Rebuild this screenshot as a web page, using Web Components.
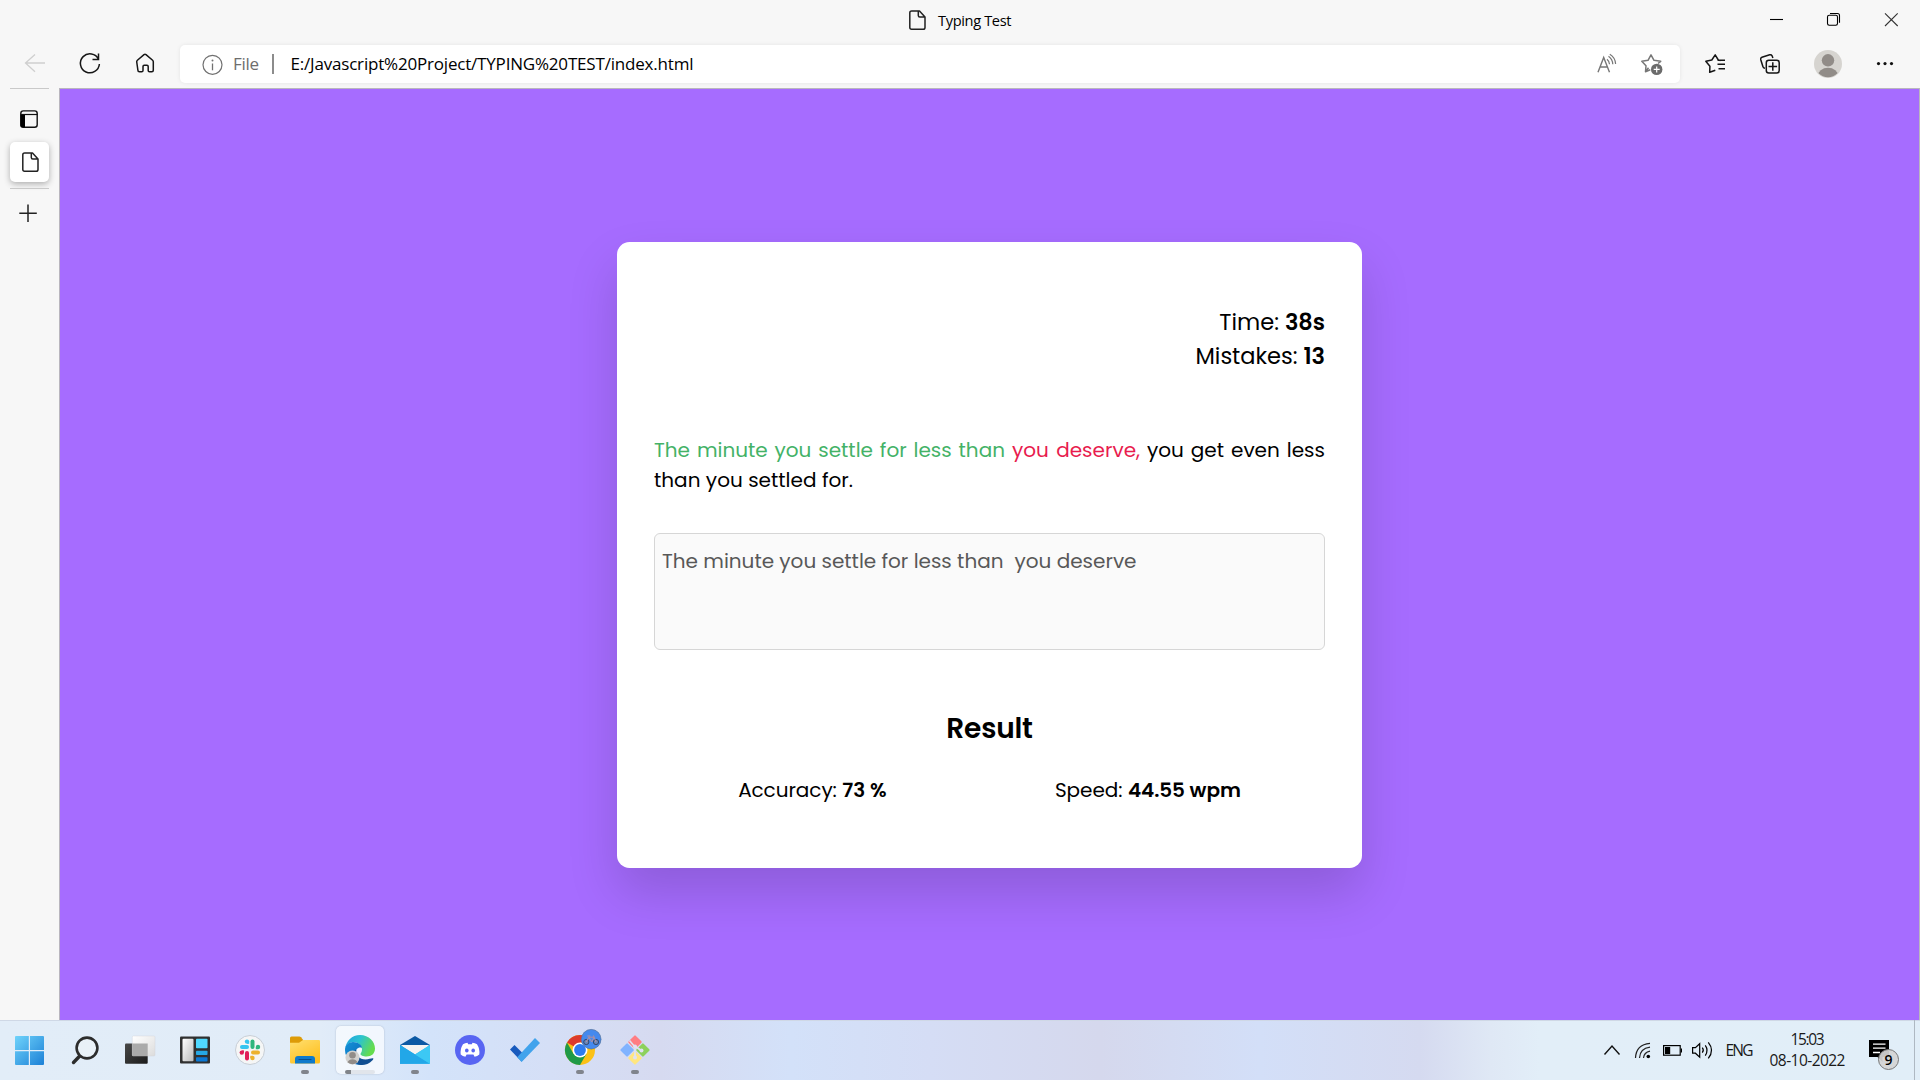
<!DOCTYPE html>
<html lang="en">
<head>
<meta charset="utf-8">
<title>Typing Test</title>
<style>
html,body{margin:0;height:100%;overflow:hidden;background:#f7f7f7}
body{font-family:"Open Sans","Noto Sans",sans-serif;color:#000}
</style>
</head>
<body>
<desktop-screen></desktop-screen>
<script>
// Icon artwork: [viewBox, markup]. The viewBox size is also the box size in pixels.
const doc = '<path d="M2.2 1h8.300l5.500 6v10.500q0 1.800-1.800 1.800H2.500Q.8 19.300.8 17.500V2.800Q.8 1 2.500 1M9.300 1.200V5.600q0 1.500 1.500 1.500H15.800" fill="none" stroke="#222" stroke-width="1.500" stroke-linejoin="round"/>';
const ICONS = {
  doc: ['0 0 17 20', doc],
  back: ['7 40 55 48', '<path d="M45 63H25.500M35 54.500 25.500 63l9.500 8.700" fill="none" stroke="#cfcfcf" stroke-width="1.300"/>'],
  reload: ['62 40 55 48', '<path d="M98.500 59.200A9.500 9.500 0 1 0 99.400 64M98.500 53.500V59.500H92.500" fill="none" stroke="#161616" stroke-width="1.500"/>'],
  home: ['117 40 55 48', '<path d="M136.700 61.800q0-.9.700-1.500l6.600-5.600q1-.8 2 0l6.600 5.600q.7.600.7 1.500v8.400q0 1.500-1.500 1.500h-2.300q-1.300 0-1.300-1.300v-4q0-1.200-1.200-1.200h-2.800q-1.200 0-1.200 1.200v4q0 1.300-1.300 1.300h-2.300q-1.500 0-1.500-1.500z" fill="none" stroke="#161616" stroke-width="1.500"/>'],
  info: ['202 53 21 21', '<circle cx="212.500" cy="63.800" r="9.500" fill="none" stroke="#717171" stroke-width="1.200"/><path d="M212.500 62.500v6.800" stroke="#717171" stroke-width="1.300"/><circle cx="212.500" cy="59.500" r="1" fill="#717171"/>'],
  read: ['1596 52 23 22', '<path d="M1598 71.200l5.700-14.800 5.800 14.800M1600 66h7.500" fill="none" stroke="#777" stroke-width="1.400"/><path d="M1607 58.200q2.200 1.700 2.500 5M1608.500 55.200q4 2.800 4.300 8M1609.800 53.200q5.500 3.300 5.800 9.800" fill="none" stroke="#777" stroke-width="1.200"/>'],
  addstar: ['1640 52 24 24', '<path d="M1648.500 67.800 1645.500 71.700 1646 65.800 1641.800 61.300 1648 60.300 1651 54.800 1654 60.300 1660.700 61.300 1658 63.500M1645.500 71.700 1650.300 69.800" fill="none" stroke="#777" stroke-width="1.500" stroke-linejoin="round"/><circle cx="1656.700" cy="69.400" r="5.700" fill="#6b6b6b"/><path d="M1653.700 69.400h6M1656.700 66.400v6" stroke="#fff" stroke-width="1.200"/>'],
  favs: ['1688 40 55 48', '<path d="M1715.300 70.200 1709.700 72.300 1709.900 66.200 1705.800 61.300 1711.800 60 1715.200 54.800 1718.300 60 1720.500 60.500M1717.500 64.300H1725M1718.500 68.700H1725M1717.500 60.200H1725" fill="none" stroke="#161616" stroke-width="1.500" stroke-linejoin="round"/>'],
  collections: ['1743 40 55 48', '<path d="M1765 68.300q-1.800-.3-2.200-2L1760.700 59.500q-.4-1.700 1.200-2.300l7.800-2.400q1.600-.4 2.400 1l.8 2.200" fill="none" stroke="#161616" stroke-width="1.500"/><rect x="1766.300" y="60.200" width="12.900" height="12.700" rx="2.500" fill="none" stroke="#161616" stroke-width="1.500"/><path d="M1768.500 66.500h8.600M1772.800 62.300v8.400" stroke="#161616" stroke-width="1.500"/>'],
  avatar: ['1798 40 55 48', '<clipPath id="a"><circle cx="1828" cy="64" r="13.200"/></clipPath><circle cx="1828" cy="64" r="14" fill="#d6d4d0"/><circle cx="1828" cy="60.300" r="6.200" fill="#918c88"/><ellipse cx="1828" cy="76" rx="10.300" ry="8.300" fill="#918c88" clip-path="url(#a)"/>'],
  more: ['1853 40 55 48', '<g fill="#111"><circle cx="1878.500" cy="63.600" r="1.600"/><circle cx="1885" cy="63.600" r="1.600"/><circle cx="1891.500" cy="63.600" r="1.600"/></g>'],
  min: ['1748 0 57 40', '<path d="M1770 19.500h13" stroke="#000" stroke-width="1.100"/>'],
  restore: ['1805 0 57 40', '<rect x="1827.500" y="15.300" width="10" height="10" rx="1.700" fill="none" stroke="#000" stroke-width="1.100"/><path d="M1830 13.500h7.500q2 0 2 2v7.300" fill="none" stroke="#000" stroke-width="1.100"/>'],
  close: ['1862 0 58 40', '<path d="M1885 13.300l12.700 12.700M1897.700 13.300 1885 26" stroke="#333" stroke-width="1.100"/>'],
  tabs: ['20 110 18 18', '<rect x="20.800" y="110.900" width="16.400" height="16.400" rx="2.500" fill="none" stroke="#111" stroke-width="1.400"/><path d="M20.500 114.500H37.500" stroke="#111" stroke-width="1.200"/><path d="M20.500 115H25v12.300h-2.500q-2 0-2-2z" fill="#000"/>'],
  plus: ['19 204 18 18', '<path d="M19.300 213.300H36.800M28 204.600V222" stroke="#222" stroke-width="1.500"/>'],
  start: ['2 1020 55 60', '<linearGradient id="g" gradientUnits="userSpaceOnUse" x1="15" y1="1036" x2="44" y2="1065"><stop offset="0" stop-color="#6fd3fb"/><stop offset="1" stop-color="#1c80d6"/></linearGradient><path fill="url(#g)" d="M15 1037q0-1 1-1h12.800v14H15zM30 1036h13q1 0 1 1v13H30zM15 1051.200h13.800V1065H16q-1 0-1-1zM30 1051.200h14V1064q0 1-1 1H30z"/>'],
  search: ['57 1020 55 60', '<circle cx="87" cy="1048" r="10.400" fill="#edf2f7" fill-opacity=".7" stroke="#2c2c2c" stroke-width="2.600"/><path d="M79.500 1056.300 73.500 1062.500" stroke="#2c2c2c" stroke-width="3.400" stroke-linecap="round"/>'],
  taskview: ['112 1020 55 60', '<linearGradient id="g" x2="1" y2="1"><stop stop-color="#484848"/><stop offset="1" stop-color="#1b1b1b"/></linearGradient><linearGradient id="h" x2="1" y2="1"><stop stop-color="#fff"/><stop offset="1" stop-color="#dcdcdc"/></linearGradient><rect x="125" y="1043.500" width="22.700" height="20.200" rx="1" fill="url(#g)"/><rect x="132.300" y="1036" width="22.700" height="20" rx="1" fill="url(#h)" stroke="#cfd2d6" stroke-width=".4"/><rect x="132.300" y="1043.500" width="15.400" height="12.500" fill="#aaa"/>'],
  widgets: ['167 1020 55 60', '<linearGradient id="g" x2="1" y2="1"><stop stop-color="#fff"/><stop offset="1" stop-color="#bbb"/></linearGradient><rect x="180" y="1036.500" width="30" height="27" rx="1" fill="#303030"/><rect x="182.500" y="1038.800" width="11" height="22.400" rx="1" fill="url(#g)"/><rect x="196" y="1038.800" width="11.500" height="9.500" rx=".8" fill="#50d9ff"/><rect x="196" y="1050.800" width="11.500" height="4.200" rx=".8" fill="#26a8e4"/><rect x="196" y="1057.300" width="11.500" height="4.200" rx=".8" fill="#0b78d4"/>'],
  slack: ['222 1020 55 60', '<circle cx="250" cy="1050" r="14.500" fill="#f5f6f6" stroke="#c7ced6"/><g stroke-width="4" stroke-linecap="round"><path d="M242 1047h5" stroke="#36c5f0"/><path d="M252.500 1041.500v5.500" stroke="#2eb67d"/><path d="M253 1052.500h5" stroke="#ecb22e"/><path d="M247 1053v5.500" stroke="#e01e5a"/></g><circle cx="247" cy="1041.600" r="2.200" fill="#36c5f0"/><path d="M247 1041.600h2.200v2.200H247z" fill="#36c5f0"/><circle cx="258" cy="1047" r="2.200" fill="#2eb67d"/><path d="M255.800 1047h2.200v2.200h-2.200z" fill="#2eb67d"/><circle cx="241.800" cy="1052.600" r="2.200" fill="#e01e5a"/><path d="M241.800 1050.400h2.200v2.200h-2.200z" fill="#e01e5a"/><circle cx="252.500" cy="1058" r="2.200" fill="#ecb22e"/><path d="M250.300 1055.800h2.200v2.200h-2.200z" fill="#ecb22e"/>'],
  folder: ['277 1020 55 60', '<linearGradient id="g" x2=".6" y2="1"><stop stop-color="#ffdf70"/><stop offset="1" stop-color="#ffc020"/></linearGradient><path d="M290 1038q0-1.500 1.500-1.500h7.800q1 0 1.700.8l2.500 3.200-3 3H290z" fill="#dd9b07"/><path d="M290 1042.800h9l4-2.800h16q1 0 1 1v21q0 1.500-1.500 1.500h-27q-1.500 0-1.500-1.500z" fill="url(#g)"/><path d="M295 1063.500v-4.500q0-3 3-3h14q3 0 3 3v4.500z" fill="#0f7acb"/><path d="M299 1059.500h12" stroke="#0a4f8e" stroke-width="1.200" stroke-linecap="round"/>'],
  edge: ['332 1020 55 60', '<linearGradient id="g" x1="0" x2="1" y2=".4"><stop stop-color="#1e9fe0"/><stop offset=".5" stop-color="#2cc3d0"/><stop offset="1" stop-color="#64dc4e"/></linearGradient><linearGradient id="h" x2="1" y2="1"><stop stop-color="#1491d8"/><stop offset="1" stop-color="#0b64b4"/></linearGradient><path d="M345.200 1049C346 1041 352 1035 360 1035c9 0 15 6.500 15 13.500 0 5-3.500 8-8.500 8-3.500 0-6-1.200-6-2.500 0-.8 1.500-1.800 1.500-4.500 0-4-4-7.500-9-7.500-3.500 0-6.500 2-7.800 7z" fill="url(#g)"/><path d="M345 1050c0-5 3.500-8 8-8 5 0 9 3 9 6-3-1.500-7 1-7 6 0 6 4 10.500 9 10.800-10 1.500-19-5-19-14.800z" fill="url(#h)"/><path d="M356.500 1049.500c-1.500 5 3 10 9 10 3.500 0 6-1.500 7.500-1.200.8.300.2 1.200-.5 2-3.500 3.800-7.500 5-11.500 4.800-6-.8-9-7-8-11.500.5-2 2-3.500 3.500-4.100z" fill="#114f92"/><circle cx="352.500" cy="1057.500" r="7" fill="#d2d1ce"/><circle cx="352.500" cy="1055.300" r="3.300" fill="#918c88"/><path d="M347.500 1062.300q1.500-3 5-3t5 3q-5 4-10 0z" fill="#918c88"/>'],
  mail: ['387 1020 55 60', '<linearGradient id="g" x2="1"><stop stop-color="#1b94e0"/><stop offset="1" stop-color="#35c6f6"/></linearGradient><path d="M400 1045 415 1036l15 9v4H400z" fill="#0c59a4"/><path d="M401 1045h28l-8 11h-12z" fill="#f4f3f2"/><path d="M400 1045l15 9.500 15-9.500v18.800H400z" fill="url(#g)"/><path d="M400 1045 430 1063.800H400z" fill="#22a7e8"/><path d="M415 1054.500 430 1063.800V1045z" fill="#3cc8f4"/>'],
  discord: ['442 1020 55 60', '<circle cx="470" cy="1050" r="15" fill="#5865f2"/><path d="M463 1044.300q2-1.200 4.500-1.500l.7 1.400h3.600l.7-1.400q2.500.3 4.500 1.500 3 4.700 2.300 10.200-2 1.700-4.700 2.200l-1.200-2.200h-6.800l-1.200 2.200q-2.700-.5-4.700-2.200-.7-5.500 2.300-10.200z" fill="#fff"/><ellipse cx="466.800" cy="1050.600" rx="1.800" ry="2" fill="#5865f2"/><ellipse cx="473.200" cy="1050.600" rx="1.800" ry="2" fill="#5865f2"/>'],
  todo: ['497 1020 55 60', '<path d="M510 1049.500 514.500 1045 526 1056.500 521.500 1061.500z" fill="#185abd"/><path d="M517.200 1057.300 535 1038 540 1043 521.600 1062z" fill="#41a3ec"/>'],
  chrome: ['552 1020 55 60', '<circle cx="580" cy="1050" r="15" fill="#fbc116"/><path d="M580 1050 567 1042.500A15 15 0 0 1 593 1042.500H580z" fill="#dc3a2c"/><path d="M567 1042.500A15 15 0 0 0 580 1065L586.500 1053.800 573.500 1053.800z" fill="#1f9a48"/><circle cx="580" cy="1050" r="7.500" fill="#fff"/><circle cx="580" cy="1050" r="5.900" fill="#2e7cf0"/><circle cx="591.200" cy="1039.200" r="10" fill="#4489ee"/><g fill="#6a87b8" stroke="#30466f" stroke-width="1"><circle cx="586.300" cy="1042" r="2.600"/><circle cx="596" cy="1042" r="2.600"/></g><path d="M586.300 1042l2.500-4.800h5.200l2 4.800M589 1037.500l2.800 4.500 2-4.500M587.300 1036h3M593.500 1035.500l.7 2" fill="none" stroke="#b58f9e" stroke-width="1"/><circle cx="591.200" cy="1039.200" r="9.800" fill="none" stroke="#5d728e" stroke-width=".6"/>'],
  git: ['607 1020 55 60', '<g transform="translate(635 1050) rotate(45)"><rect x="-10.600" y="-10.600" width="10" height="10" rx="1" fill="#ff7d82"/><rect x=".6" y="-10.600" width="10" height="10" rx="1" fill="#8dd15b"/><rect x="-10.600" y=".6" width="10" height="10" rx="1" fill="#80b3ff"/><rect x=".6" y=".6" width="10" height="10" rx="1" fill="#ffe680"/></g><path d="M629.500 1040.500l5.500 6.500v10M635 1046l6 4.500" fill="none" stroke="#dfe2f2" stroke-width="1.700"/><circle cx="635" cy="1046.500" r="2" fill="#dfe2f2"/><circle cx="635" cy="1057.500" r="2" fill="#dfe2f2"/><circle cx="641.500" cy="1050.500" r="2" fill="#dfe2f2"/>'],
  chevron: ['1602 1040 20 20', '<path d="M1604.500 1054.500 1612 1046l7.500 8.500" fill="none" stroke="#111" stroke-width="1.400"/>'],
  wifi: ['1634 1040 19 20', '<g fill="none" stroke="#222" stroke-width="1.200"><path d="M1635.500 1058q.5-13.500 14.500-14.700M1639.500 1058q.5-9.500 10.500-10.800M1643.500 1058q.5-5.500 6.500-6.800"/></g><circle cx="1648.300" cy="1056.500" r="1.800" fill="#000"/>'],
  battery: ['1662 1040 22 20', '<rect x="1663.600" y="1045.600" width="16.600" height="9.600" fill="none" stroke="#000" stroke-width="1.200"/><path d="M1681.400 1048.500v4" stroke="#000" stroke-width="1.200"/><path d="M1665 1047h5.200v7H1665z"/>'],
  speaker: ['1691 1040 22 20', '<g fill="none" stroke="#000" stroke-width="1.200"><path d="M1692.600 1047.700h2.800l4.300-4v13.500l-4.300-4h-2.800zM1702.300 1047.700q2 2.500 0 5M1705.300 1045.300q3.500 5 0 10.300M1708.300 1042.300q6.500 8 0 16"/></g>'],
  notify: ['1868 1038 32 33', '<path d="M1869 1040h20v17h-6.500v5l-5-5H1869z"/><path d="M1873 1044.200h12.500M1873 1048.200h12.500M1873 1052.500h7" stroke="#fff" stroke-width="1.300"/>'],
};

const define = (tag, css, html, ready) => {
  const tpl = document.createElement('template');
  tpl.innerHTML = `<style>${css}</style>${html}`;
  customElements.define(tag, class extends HTMLElement {
    connectedCallback() {
      if (this.shadowRoot) return;
      this.attachShadow({ mode: 'open' }).append(tpl.content.cloneNode(true));
      if (ready) ready(this);
    }
  });
};

define('ui-icon', ':host{display:block;flex:none}svg{display:block;overflow:visible}', '<div></div>', el => {
  const [box, art] = ICONS[el.getAttribute('name')];
  const [, , w, h] = box.split(' ');
  el.shadowRoot.querySelector('div').innerHTML = `<svg width="${w}" height="${h}" viewBox="${box}">${art}</svg>`;
});

// Text run that fills exactly the width in its "w" attribute: by its letter
// spacing, or with the "words" attribute by the spaces between its words.
define('fit-text', ':host{display:inline-block;white-space:pre;flex:none}', '<slot></slot>', el => {
  const w = +el.getAttribute('w');
  const text = el.textContent;
  const spare = w - el.getBoundingClientRect().width;
  if (el.hasAttribute('words')) el.style.wordSpacing = spare / (text.split(' ').length - 1) + 'px';
  else el.style.letterSpacing = spare / (text.length - 1) + 'px';
  el.style.width = w + 'px';
});

define('title-bar', `
:host{display:flex;height:40px}
.title{flex:1;display:flex;padding:10px 0 0 909px;box-sizing:border-box;font-size:14.600px;line-height:22px}
fit-text{margin:-1px 0 0 12px}`,
`<div class="title"><ui-icon name="doc"></ui-icon><fit-text w="73.500">Typing Test</fit-text></div>
<ui-icon name="min"></ui-icon><ui-icon name="restore"></ui-icon><ui-icon name="close"></ui-icon>`);

define('address-bar', `
:host{display:flex;align-items:center;box-sizing:border-box;width:1500px;height:38px;margin:5px 8px 0;padding:0 16px 0 22px;background:#fff;border-radius:5px;box-shadow:0 0 4px rgba(0,0,0,.08);font-size:17px;line-height:38px}
.file{color:#6d6d6d;margin-left:10px}
i{width:1.500px;height:20px;background:#8c8c8c;margin:0 17px 0 13px}
.grow{flex:1}ui-icon+ui-icon{margin-left:21px}`,
`<ui-icon name="info"></ui-icon><fit-text class="file" w="26">File</fit-text><i></i>
<fit-text w="403">E:/Javascript%20Project/TYPING%20TEST/index.html</fit-text><span class="grow"></span>
<ui-icon name="read"></ui-icon><ui-icon name="addstar"></ui-icon>`);

define('tool-bar', ':host{display:flex;height:48px;padding-left:7px}',
`<ui-icon name="back"></ui-icon><ui-icon name="reload"></ui-icon><ui-icon name="home"></ui-icon>
<address-bar></address-bar>
<ui-icon name="favs"></ui-icon><ui-icon name="collections"></ui-icon><ui-icon name="avatar"></ui-icon><ui-icon name="more"></ui-icon>`);

define('side-rail', `
:host{display:flex;flex-direction:column;width:59px;padding-left:10px;box-sizing:border-box}
hr{margin:0;border:0;height:1px;width:39px;background:#c9c9c9;flex:none}
.list{margin:21px 0 14px 10px}
.tab{width:39px;height:40px;padding-left:1px;box-sizing:border-box;background:#fff;border-radius:5px;box-shadow:0 2px 6px rgba(0,0,0,.3);display:flex;align-items:center;justify-content:center;margin-bottom:6px}
.plus{margin:15px 0 0 9px}`,
`<hr><ui-icon class="list" name="tabs"></ui-icon><div class="tab"><ui-icon name="doc"></ui-icon></div><hr><ui-icon class="plus" name="plus"></ui-icon>`);

define('typing-card', `
:host{display:block;box-sizing:border-box;width:745px;height:626.300px;margin-top:1px;padding:64.500px 37px 0;background:#fff;border-radius:12.500px;box-shadow:0 25px 50px rgba(0,0,0,.15);font-family:Poppins,Inter,sans-serif;font-size:20px;line-height:30px}
b,h3{font-weight:600}
.stats{font-size:22.500px;line-height:33.750px}
.pair{display:flex}
.stats .pair{justify-content:flex-end}
.quote{padding-top:61px}
.line{display:flex;justify-content:space-between}
.ok{color:#44b267}.bad{color:#e81c4e}
.input{box-sizing:border-box;height:117px;margin-top:38px;padding:12.500px 7px;border:1px solid #d6d6d6;border-radius:6px;background:#fafafa;color:#585858;display:flex;gap:11px}
h3{margin:58px 0 0;font-size:28px;line-height:42px;text-align:center}
.results{display:flex;justify-content:space-around;margin-top:25px}`,
`<div class="stats"><div class="pair"><fit-text w="65.700">Time: </fit-text><b><fit-text w="40">38s</fit-text></b></div>
<div class="pair"><fit-text w="108">Mistakes: </fit-text><b><fit-text w="21.500">13</fit-text></b></div></div>
<div class="quote"><div class="line"><fit-text words class="ok" w="351">The minute you settle for less than</fit-text><fit-text words class="bad" w="128">you deserve,</fit-text><fit-text words w="178">you get even less</fit-text></div>
<fit-text w="199">than you settled for.</fit-text></div>
<div class="input"><fit-text w="341.500">The minute you settle for less than</fit-text><fit-text w="122">you deserve</fit-text></div>
<h3><fit-text w="86.500">Result</fit-text></h3>
<div class="results"><div class="pair"><fit-text w="104">Accuracy: </fit-text><b><fit-text w="44.500">73 %</fit-text></b></div>
<div class="pair"><fit-text w="73">Speed: </fit-text><b><fit-text w="113">44.55 wpm</fit-text></b></div></div>`);

define('page-view', `
:host{flex:1;display:flex;box-sizing:border-box;align-items:center;justify-content:center;background:#a66cff;border:1px solid #b9b6be;border-bottom:0;overflow:hidden}`, '<typing-card></typing-card>');

define('task-slot', `
:host{display:block;position:relative;width:55px;height:60px;flex:none}
:host([active])::before{content:"";position:absolute;left:4px;top:5.500px;width:48px;height:48.500px;border-radius:5px;background:rgba(250,252,255,.75);box-shadow:0 0 1.500px rgba(80,90,120,.45)}
ui-icon{position:relative}
:host([run])::after{content:"";position:absolute;left:24px;top:50px;width:8px;height:4px;border-radius:2px;background:#80848c}
:host([active])::after{content:"";position:absolute;left:13px;top:50px;width:30px;height:4px;border-radius:2px;background:linear-gradient(90deg,#808489 6px,#e1e5eb 6px)}`,
'', el => {
  const icon = document.createElement('ui-icon');
  icon.setAttribute('name', el.getAttribute('icon'));
  el.shadowRoot.append(icon);
});

define('system-tray', `
:host{display:flex;align-items:center;height:60px;font-size:15.500px;line-height:21px;color:#191919}
.clock{display:flex;flex-direction:column;align-items:center;margin:-1px 0 0 16px}
.note{position:relative;margin:9px 0 0 22.500px}
.badge{position:absolute;left:10px;top:11px;width:19px;height:19px;border:1px solid #777;border-radius:50%;background:rgba(212,212,212,.93);font:600 14px/19px "Open Sans",sans-serif;text-align:center;color:#000}
i{width:1px;height:60px;background:#aeb8c2;margin:0 5px 0 14px}`,
`<ui-icon name="chevron"></ui-icon><ui-icon name="wifi" style="margin-left:12px"></ui-icon><ui-icon name="battery" style="margin-left:9px"></ui-icon><ui-icon name="speaker" style="margin-left:7px"></ui-icon>
<fit-text w="28" style="margin-left:13px">ENG</fit-text>
<div class="clock"><fit-text w="34">15:03</fit-text><fit-text w="76">08-10-2022</fit-text></div>
<div class="note"><ui-icon name="notify"></ui-icon><span class="badge">9</span></div><i></i>`);

define('task-bar', `
:host{display:flex;height:60px;box-sizing:border-box;padding-left:2px;box-shadow:inset 0 1px #cfd8e6;background:linear-gradient(90deg,#e2edf8 0,#e1ecf8 320px,#d3e3fa 430px,#d5dff6 550px,#d6daf0 660px,#d3e1f9 790px,#d5ddf5 930px,#d5d8ed 1100px,#d3dff8 1260px,#d5daf0 1420px,#dfe8f5 1490px,#e2eef8 1540px,#e1eef8 100%)}
.grow{flex:1}`,
`<task-slot icon="start"></task-slot><task-slot icon="search"></task-slot><task-slot icon="taskview"></task-slot><task-slot icon="widgets"></task-slot><task-slot icon="slack"></task-slot><task-slot icon="folder" run></task-slot><task-slot icon="edge" active></task-slot><task-slot icon="mail" run></task-slot><task-slot icon="discord"></task-slot><task-slot icon="todo"></task-slot><task-slot icon="chrome" run></task-slot><task-slot icon="git" run></task-slot>
<span class="grow"></span><system-tray></system-tray>`);

define('desktop-screen', `
:host{display:flex;flex-direction:column;width:1920px;height:1080px;background:#f7f7f7}
main{flex:1;display:flex;min-height:0}`,
`<title-bar></title-bar><tool-bar></tool-bar><main><side-rail></side-rail><page-view></page-view></main><task-bar></task-bar>`);
</script>
</body>
</html>
